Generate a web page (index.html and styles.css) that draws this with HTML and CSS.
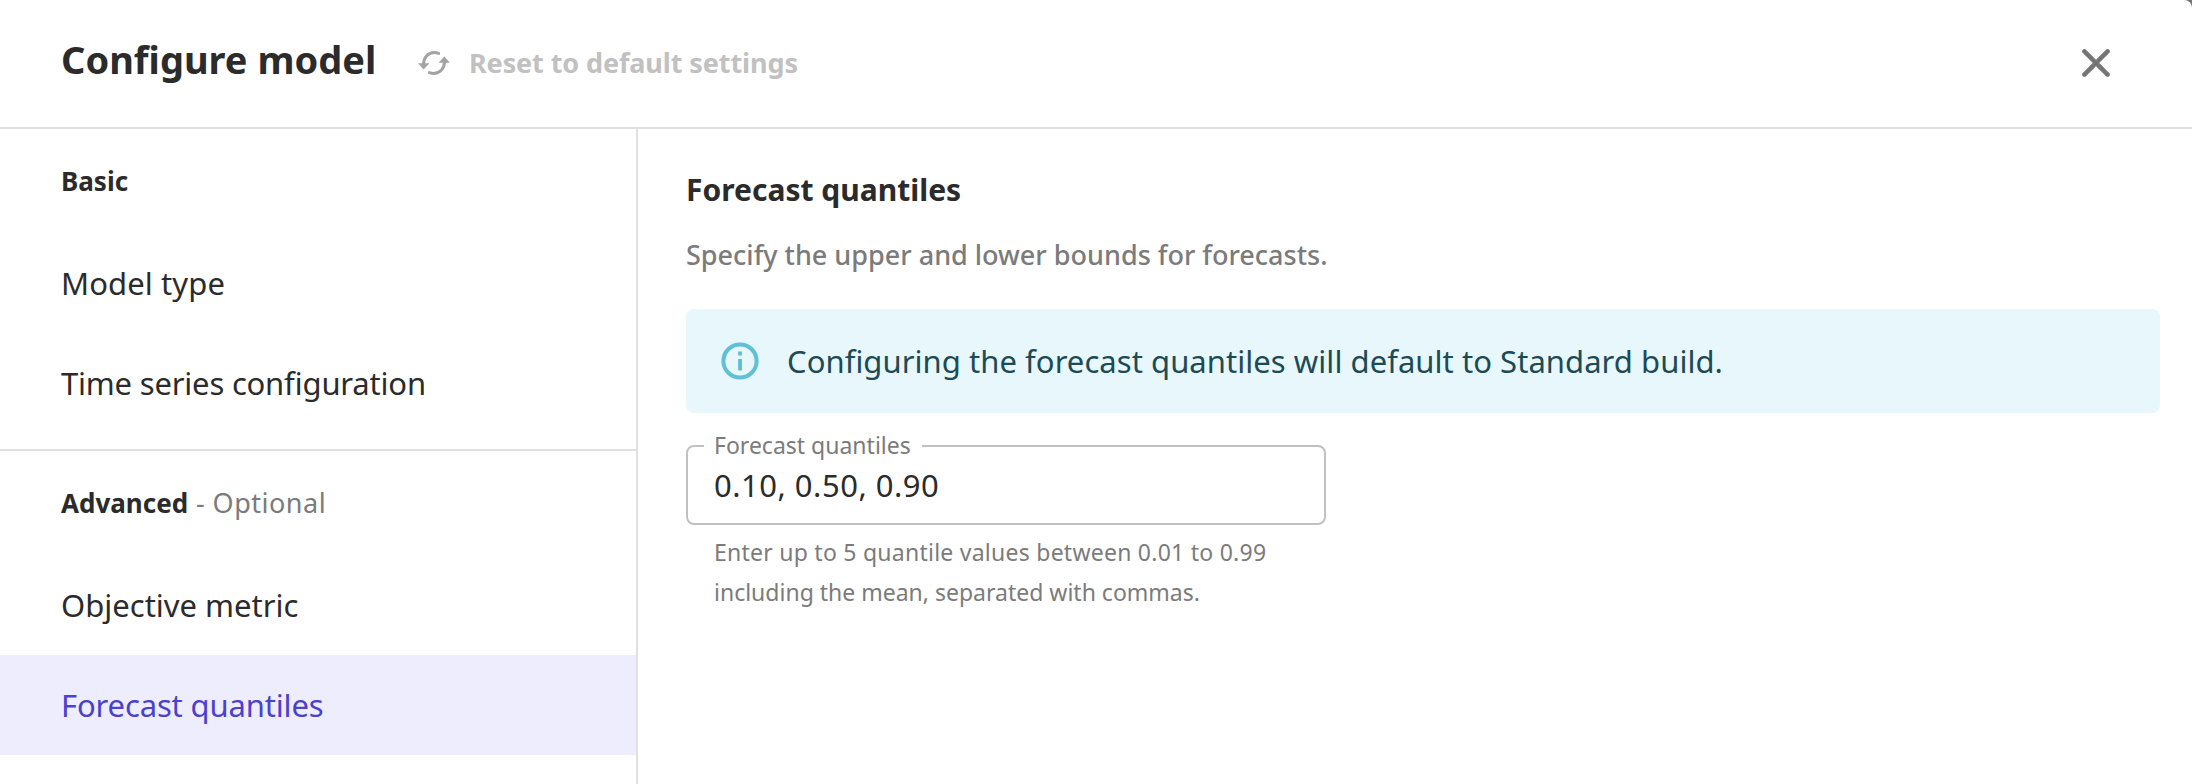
FILE: index.html
```html
<!DOCTYPE html>
<html lang="en">
<head>
<meta charset="utf-8">
<title>Configure model</title>
<link rel="stylesheet" href="styles.css">
</head>
<body>
<div class="dialog">
  <header class="header">
    <h1 class="title">Configure model</h1>
    <button class="reset" type="button">
      <svg class="reset-icon" viewBox="0 0 34 26" width="34" height="26">
        <path class="arc" d="M6.600 14C6.600 7.200 11.200 2.600 17.500 2.600C19 2.600 20.200 2.900 21.600 3.400"/>
        <path class="arc" d="M27.400 12C27.400 18.800 22.800 23.400 16.500 23.400C15 23.400 13.800 23.100 12.400 22.600"/>
        <path class="head" d="M1 13.200H12.400L6.700 19.400Z"/>
        <path class="head" d="M33 12.800H21.600L27.300 6.600Z"/>
      </svg>
      <span class="reset-label">Reset to default settings</span>
    </button>
    <button class="close" type="button" aria-label="Close">
      <svg viewBox="0 0 28 28" width="28" height="28"><path d="M2.400 2.400L25.600 25.600M25.600 2.400L2.400 25.600"/></svg>
    </button>
  </header>
  <div class="body">
    <nav class="sidebar">
      <section class="group">
        <h2 class="group-title">Basic</h2>
        <a class="item item-short">Model type</a>
        <a class="item item-long">Time series configuration</a>
      </section>
      <section class="group">
        <h2 class="group-title">Advanced <span class="optional">- Optional</span></h2>
        <a class="item">Objective metric</a>
        <a class="item item-selected">Forecast quantiles</a>
      </section>
    </nav>
    <main class="main">
      <h2 class="heading">Forecast quantiles</h2>
      <p class="description">Specify the upper and lower bounds for forecasts.</p>
      <div class="alert">
        <svg class="info-icon" viewBox="0 0 38 38" width="38" height="38">
          <circle cx="19" cy="19" r="16.600"/>
          <path d="M17.100 9.600h3.900v4h-3.900zM17.100 17h3.900v11.500h-3.900z"/>
        </svg>
        <span class="alert-text">Configuring the forecast quantiles will default to Standard build.</span>
      </div>
      <div class="field">
        <label class="field-label">Forecast quantiles</label>
        <div class="field-value">0.10, 0.50, 0.90</div>
      </div>
      <p class="help"><span class="help-first">Enter up to 5 quantile values between 0.01 to 0.99</span><br>including the mean, separated with commas.</p>
    </main>
  </div>
</div>
</body>
</html>
```
FILE: styles.css
```css
* { box-sizing: border-box; }

body {
  margin: 0;
  background: #757575;
  color: #2b2b2b;
  font-family: "Noto Sans", "Open Sans", sans-serif;
  font-feature-settings: "liga" 1;
}

h1, h2, p { margin: 0; }

button {
  padding: 0;
  border: 0;
  background: none;
  font-family: inherit;
}

.dialog {
  display: flex;
  flex-direction: column;
  height: 784px;
  overflow: hidden;
  background: #fff;
  border-top-right-radius: 8px;
}

.header {
  display: flex;
  align-items: center;
  height: 129px;
  padding: 0 82px 0 61px;
  border-bottom: 2px solid #e0e0e0;
}

.title {
  width: 356px;
  padding-bottom: 10px;
  font-size: 38px;
  line-height: 52px;
  font-weight: 700;
}

.reset {
  display: flex;
  align-items: center;
  gap: 18px;
  padding-bottom: 2px;
}

.reset-icon .arc { fill: none; stroke: #a3a3a3; stroke-width: 3; stroke-linecap: round; }
.reset-icon .head { fill: #a3a3a3; }

.reset-label {
  color: #c1c1c1;
  font-size: 27px;
  font-weight: 700;
  line-height: 36px;
  letter-spacing: -0.1px;
}

.close { display: flex; margin-left: auto; padding-bottom: 1px; }
.close path { stroke: #757575; stroke-width: 4.5; stroke-linecap: round; }

.body { display: flex; flex: 1; min-height: 0; }

.sidebar { width: 638px; border-right: 2px solid #e0e0e0; }

.group + .group { margin-top: 16px; border-top: 2px solid #e0e0e0; }

.group-title {
  height: 104px;
  padding-left: 61px;
  font-size: 26px;
  line-height: 104px;
  font-weight: 700;
}

.optional {
  margin-left: 1px;
  color: #7b7b7b;
  font-size: 27px;
  font-weight: 400;
  line-height: 1;
  letter-spacing: 0.5px;
}

.item {
  display: block;
  padding-left: 61px;
  font-size: 31px;
  line-height: 100px;
}

.item-short { letter-spacing: 0.1px; }
.item-long { letter-spacing: -0.2px; }
.item-selected { background: #eeedfd; color: #4a41cd; letter-spacing: -0.15px; }

.main { flex: 1; padding: 41px 32px 0 48px; }

.heading { font-size: 30px; line-height: 40px; }

.description {
  margin-top: 25px;
  color: #7b7b7b;
  font-size: 27px;
  line-height: 40px;
  font-weight: 500;
}

.alert {
  display: flex;
  align-items: center;
  gap: 28px;
  height: 104px;
  margin-top: 34px;
  padding-left: 35px;
  border-radius: 8px;
  background: #e7f7fb;
}

.info-icon circle { fill: none; stroke: #5fc0d6; stroke-width: 4; }
.info-icon path { fill: #5fc0d6; }

.alert-text { color: #1c4a55; font-size: 31px; letter-spacing: 0.05px; }

.field {
  position: relative;
  width: 640px;
  height: 80px;
  margin-top: 32px;
  padding-left: 26px;
  border: 2px solid #c1c1c1;
  border-radius: 8px;
}

.field-label {
  position: absolute;
  top: -18px;
  left: 16px;
  width: 218px;
  padding-left: 10px;
  background: #fff;
  color: #7b7b7b;
  font-size: 23px;
  line-height: 32px;
}

.field-value {
  padding-top: 18px;
  font-size: 31px;
  line-height: 40px;
  letter-spacing: 0.5px;
}

.help {
  margin-top: 7px;
  padding-left: 28px;
  color: #7b7b7b;
  font-size: 23px;
  line-height: 40px;
}

.help-first { letter-spacing: 0.25px; }
```
